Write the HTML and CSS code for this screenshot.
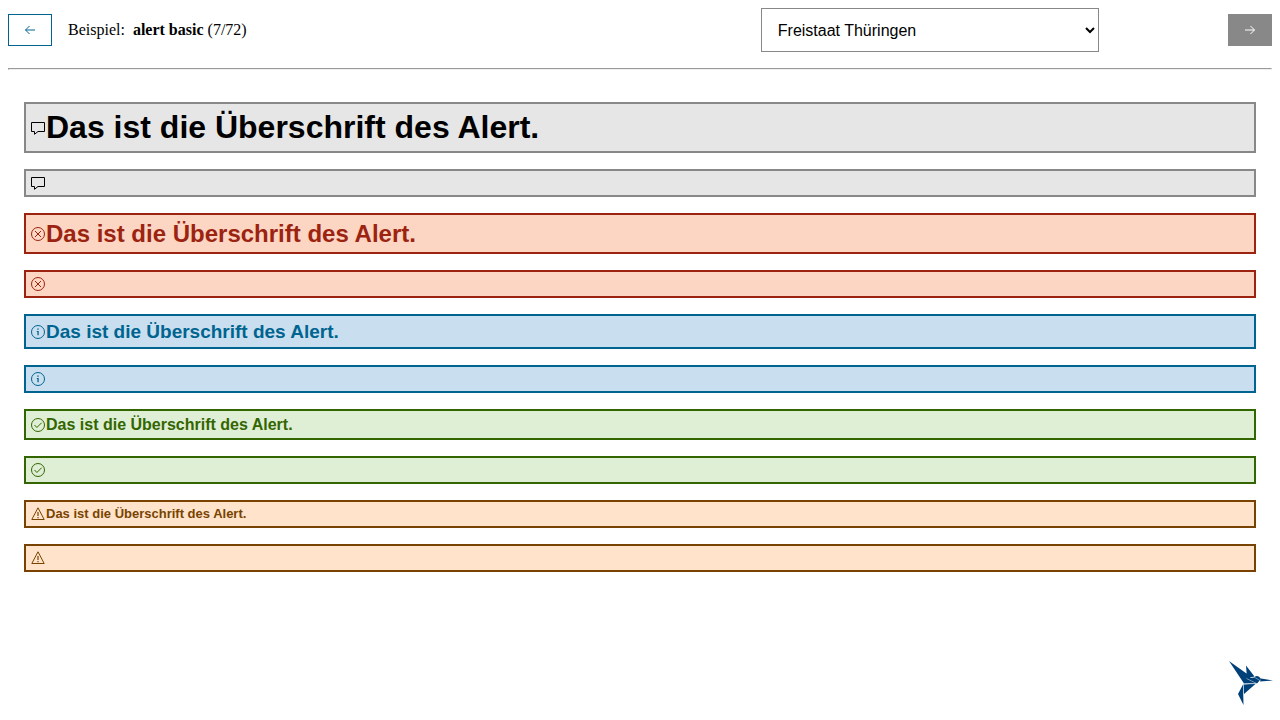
FILE: index.html
```
<!DOCTYPE html>
<html lang="de">
<head>
<meta charset="utf-8">
<meta name="viewport" content="width=device-width, initial-scale=1">
<title>alert basic</title>
<link rel="stylesheet" href="styles.css">
</head>
<body>
<svg class="symbols" aria-hidden="true">
  <symbol id="message" viewBox="0 0 16 16"><path d="M1.5 2.5h13v9H8L4.5 14.3v-2.8h-3z" fill="none" stroke="currentColor"/></symbol>
  <symbol id="error" viewBox="0 0 16 16"><g fill="none" stroke="currentColor"><circle cx="8" cy="8" r="6.5"/><path d="M5 5l6 6M11 5l-6 6"/></g></symbol>
  <symbol id="info" viewBox="0 0 16 16"><circle cx="8" cy="8" r="6.5" fill="none" stroke="currentColor"/><path d="M7.3 4.4h1.4v1.3H7.3zM6.8 7h1.9v4.2H7.4V8h-.6z" fill="currentColor"/></symbol>
  <symbol id="success" viewBox="0 0 16 16"><g fill="none" stroke="currentColor"><circle cx="8" cy="8" r="6.5"/><path d="M4.5 8l2.4 2.5 4.8-4.8"/></g></symbol>
  <symbol id="warning" viewBox="0 0 16 16"><path d="M8 1.8l6.2 11.7H1.8z" fill="none" stroke="currentColor"/><path d="M7.4 6h1.2v4H7.4zM7.4 11h1.2v1.3H7.4z" fill="currentColor"/></symbol>
</svg>
<header class="toolbar">
  <button class="nav" type="button" aria-label="zurück"><svg class="arrow" viewBox="0 0 12 12"><path d="M11 6H1.5M5.5 2L1.5 6l4 4"/></svg></button>
  <div class="controls">
    <div class="sample">Beispiel:&nbsp; <strong>alert basic</strong> (7/72)</div>
    <select class="theme" aria-label="Theme"><option>Freistaat Thüringen</option></select>
  </div>
  <button class="nav nav-next" type="button" aria-label="weiter"><svg class="arrow" viewBox="0 0 12 12"><path d="M1 6h9.5M6.5 2l4 4-4 4"/></svg></button>
</header>
<hr class="divider">
<main class="alerts">
  <div class="alert"><svg class="icon"><use href="#message"/></svg><h1 class="title title-1">Das ist die Überschrift des Alert.</h1></div>
  <div class="alert"><svg class="icon"><use href="#message"/></svg></div>
  <div class="alert error"><svg class="icon"><use href="#error"/></svg><h2 class="title title-2">Das ist die Überschrift des Alert.</h2></div>
  <div class="alert error"><svg class="icon"><use href="#error"/></svg></div>
  <div class="alert info"><svg class="icon"><use href="#info"/></svg><h3 class="title title-3">Das ist die Überschrift des Alert.</h3></div>
  <div class="alert info"><svg class="icon"><use href="#info"/></svg></div>
  <div class="alert success"><svg class="icon"><use href="#success"/></svg><h4 class="title title-4">Das ist die Überschrift des Alert.</h4></div>
  <div class="alert success"><svg class="icon"><use href="#success"/></svg></div>
  <div class="alert warning"><svg class="icon"><use href="#warning"/></svg><h5 class="title title-5">Das ist die Überschrift des Alert.</h5></div>
  <div class="alert warning"><svg class="icon"><use href="#warning"/></svg></div>
</main>
<svg class="bird" viewBox="0 0 44 44" role="img" aria-label="Kolibri">
  <path class="bird-body" d="M0 0L17.5 12.5 26.5 22 15 22.500zM17 4.500L25.500 15.500 18 17zM18 17.500L25 16.500Q29 13 32 18L28 22.500zM32 17.500L44 19.500 31 20.500zM14.500 23.500L27 22.500 15 33zM14 23.500L14.500 44 9 33z"/>
  <path class="bird-lines" d="M17.500 17.500L27.500 22.500 14 23M25 16L31 19.500M14.500 23.500V34"/>
</svg>
</body>
</html>
```
FILE: styles.css
```
body {
  margin: 8px;
  background: #fff;
  color: #000;
  font: 16px/18px "Liberation Serif", serif;
}

.symbols {
  display: none;
}

.toolbar {
  display: flex;
  align-items: center;
}

.nav {
  display: flex;
  align-items: center;
  justify-content: center;
  width: 44px;
  height: 32px;
  padding: 0;
  border: 1px solid #006490;
  background: #fff;
  color: #006490;
}

.nav-next {
  border-color: #888;
  background: #888;
  color: #fff;
}

.arrow {
  width: 12px;
  height: 12px;
  fill: none;
  stroke: currentColor;
}

.controls {
  flex: 1;
  display: grid;
  grid-template-columns: 6fr 3fr 1fr;
  align-items: center;
  gap: 16px;
  margin-left: 16px;
}

.theme {
  width: 100%;
  height: 44px;
  padding: 0 0 0 12px;
  border: 1px solid #888;
  border-radius: 0;
  background: #fff;
  color: #000;
  font: 16px "Liberation Sans", sans-serif;
}

.divider {
  margin: 16px 0;
}

.alerts {
  display: flex;
  flex-direction: column;
  gap: 16px;
  padding: 16px;
}

.alert {
  display: flex;
  align-items: center;
  min-height: 16px;
  padding: 4px;
  border: 2px solid #888;
  background: #e6e6e6;
  color: #000;
}

.error {
  border-color: #9b2310;
  background: #fcd5c3;
  color: #9b2310;
}

.info {
  border-color: #006490;
  background: #c9dfef;
  color: #006490;
}

.success {
  border-color: #336600;
  background: #dfefd5;
  color: #336600;
}

.warning {
  border-color: #784300;
  background: #ffe3ca;
  color: #784300;
}

.icon {
  flex: none;
  width: 16px;
  height: 16px;
}

.title {
  margin: 0;
  font-family: "Liberation Sans", sans-serif;
  font-weight: 700;
}

.title-1 {
  font-size: 32px;
  line-height: 39px;
}

.title-2 {
  font-size: 24px;
  line-height: 29px;
}

.title-3 {
  font-size: 19px;
  line-height: 23px;
}

.title-4 {
  font-size: 16px;
  line-height: 19px;
}

.title-5 {
  font-size: 13px;
  line-height: 16px;
}

.bird {
  position: fixed;
  right: 7px;
  bottom: 15px;
  width: 44px;
  height: 44px;
}

.bird-body {
  fill: #004078;
}

.bird-lines {
  fill: none;
  stroke: #b9cbdc;
  stroke-width: 0.6;
}
```
